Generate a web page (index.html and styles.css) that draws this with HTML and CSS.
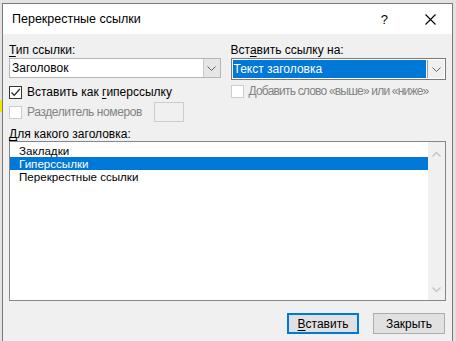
FILE: index.html
```html
<!DOCTYPE html>
<html lang="ru">
<head>
    <meta charset="UTF-8">
    <title>Перекрестные ссылки</title>
    <link rel="stylesheet" href="styles.css">
</head>
<body>
    <div class="dialog">
        <div class="titlebar">
            <span class="title">Перекрестные ссылки</span>
            <span class="help">?</span>
            <svg class="close" width="11" height="11" viewBox="0 0 11 11"><path d="M0.5 0.5 L10.5 10.5 M10.5 0.5 L0.5 10.5" stroke="#000" stroke-width="1.1"/></svg>
        </div>
        <div class="content">
            <div class="columns">
                <div class="col">
                    <div class="label"><u>Т</u>ип ссылки:</div>
                    <div class="combo">
                        <span class="combo-text">Заголовок</span>
                        <span class="arrow"><svg width="9" height="5" viewBox="0 0 9 5"><path d="M0.5 0.5 L4.5 4.5 L8.5 0.5" fill="none" stroke="#606060"/></svg></span>
                    </div>
                    <div class="check">
                        <span class="box"><svg width="11" height="11" viewBox="0 0 11 11"><path d="M1.5 5.5 L4.2 8.3 L9.8 2" fill="none" stroke="#222" stroke-width="1.2"/></svg></span>
                        <span>Вставить как <u>г</u>иперссылку</span>
                    </div>
                    <div class="check disabled">
                        <span class="box"></span>
                        <span class="tight">Разделитель номеров</span>
                        <span class="textbox"></span>
                    </div>
                </div>
                <div class="col">
                    <div class="label">Вст<u>а</u>вить ссылку на:</div>
                    <div class="combo list-combo">
                        <span class="combo-text selected">Текст заголовка</span>
                        <span class="arrow"><svg width="9" height="5" viewBox="0 0 9 5"><path d="M0.5 0.5 L4.5 4.5 L8.5 0.5" fill="none" stroke="#606060"/></svg></span>
                    </div>
                    <div class="check disabled">
                        <span class="box"></span>
                        <span class="tighter">Добавить слово «выше» или «ниже»</span>
                    </div>
                </div>
            </div>
            <div class="label list-label"><u>Д</u>ля какого заголовка:</div>
            <div class="listbox">
                <div class="items">
                    <div class="item">Закладки</div>
                    <div class="item active">Гиперссылки</div>
                    <div class="item">Перекрестные ссылки</div>
                </div>
                <div class="scrollbar">
                    <svg width="9" height="5" viewBox="0 0 9 5"><path d="M0.5 4.5 L4.5 0.5 L8.5 4.5" fill="none" stroke="#c2c2c2" stroke-width="1.3"/></svg>
                    <svg width="9" height="5" viewBox="0 0 9 5"><path d="M0.5 0.5 L4.5 4.5 L8.5 0.5" fill="none" stroke="#c2c2c2" stroke-width="1.3"/></svg>
                </div>
            </div>
            <div class="buttons">
                <button class="btn default"><u>В</u>ставить</button>
                <button class="btn">Закрыть</button>
            </div>
        </div>
    </div>
</body>
</html>
```

FILE: styles.css
```css
body { margin: 0; height: 341px; overflow: hidden; background: linear-gradient(#f2e600, #f2e600) 0 100px / 2px 12px no-repeat, #e3e3e3; font-family: "Liberation Sans", Arial, sans-serif; font-size: 12px; color: #000; }
u { text-decoration-thickness: 1px; text-underline-offset: 2px; }

.dialog { margin: 3px 0 0 2px; width: 449px; height: 345px; border: 1px solid #7a7a7a; background: #f0f0f0; }
.titlebar { height: 30px; background: #fff; display: flex; align-items: center; padding: 0 0 0 9px; }
.title { flex: 1; font-size: 12.5px; }
.help { font-size: 13px; margin-right: 37px; }
.close { margin-right: 16px; }

.content { padding: 8px 6px 0 6px; }
.columns { display: flex; gap: 10px; }
.col:first-child { width: 212px; }
.col:last-child { width: 216px; }
.label { height: 16px; line-height: 16px; white-space: nowrap; }

.combo { display: flex; height: 18px; border: 1px solid #b5b5b5; background: #fff; }
.combo-text { flex: 1; line-height: 18px; padding-left: 2px; }
.arrow { width: 16px; background: #e6e6e6; border-left: 1px solid #c8c8c8; display: flex; align-items: center; justify-content: center; }
.list-combo { height: 20px; border-color: #7a7a7a; padding: 0 1px 0 1px; }
.list-combo .combo-text { line-height: 18px; margin: 1px 1px 1px 0; padding-left: 1px; background: #0078d7; color: #fff; }
.list-combo .arrow { background: #f0f0f0; border-left: 1px solid #a0a0a0; margin: 1px 0; }

.check { display: flex; align-items: center; gap: 5px; height: 16px; margin-top: 6px; white-space: nowrap; }
.col:first-child .check + .check { margin-top: 4px; }
.col:last-child .check { margin-top: 3px; }
.box { flex: none; width: 11px; height: 11px; border: 1px solid #333; background: #fff; display: flex; align-items: center; justify-content: center; }
.disabled { color: #838383; }
.disabled .box { border-color: #cccccc; background: #fff; }
.tight { letter-spacing: -0.4px; }
.tighter { letter-spacing: -0.8px; }
.textbox { flex: none; width: 28px; height: 18px; border: 1px solid #cccccc; background: #f0f0f0; margin-left: 7px; }

.list-label { margin-top: 6px; height: 15px; }
.listbox { display: flex; height: 158px; border: 1px solid #828790; background: #fff; }
.items { flex: 1; padding-top: 2px; }
.item { height: 13px; line-height: 13px; padding-left: 9px; font-size: 11.6px; }
.item.active { background: #0078d7; color: #fff; }
.scrollbar { width: 17px; background: #f0f0f0; display: flex; flex-direction: column; justify-content: space-between; align-items: center; padding: 10px 0 8px; }

.buttons { display: flex; justify-content: flex-end; gap: 14px; margin-top: 12px; padding-right: 1px; }
.btn { width: 72px; height: 21px; border: 1px solid #adadad; background: #e1e1e1; font-family: "Liberation Sans", Arial, sans-serif; font-size: 12px; padding: 0; color: #000; }
.btn.default { border: 2px solid #0078d7; }
```
